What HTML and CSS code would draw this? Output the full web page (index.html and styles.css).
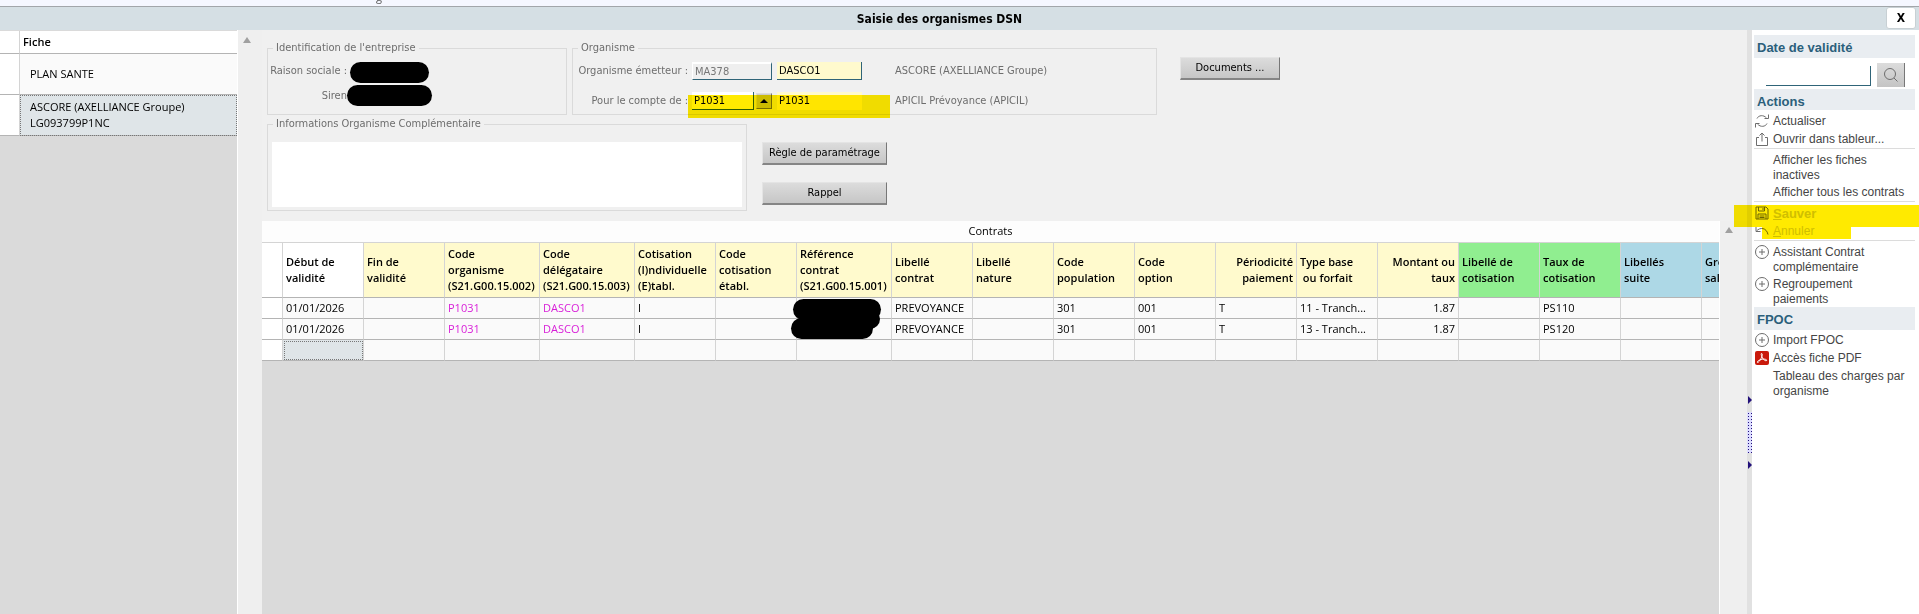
FILE: index.html
```html
<!DOCTYPE html>
<html lang="fr">
<head>
    <meta charset="UTF-8">
    <meta name="viewport" content="width=device-width, initial-scale=1.0">
    <title>Saisie des organismes DSN</title>
    <link rel="stylesheet" href="styles.css">
</head>
<body>
    <div class="top-strip"><span>g</span></div>

    <header class="title-bar">
        <h1>Saisie des organismes DSN</h1>
        <button class="close-btn" type="button">X</button>
    </header>

    <div class="window">
        <aside class="fiches">
            <table class="fiche-table">
                <thead>
                    <tr><th class="handle"></th><th>Fiche</th></tr>
                </thead>
                <tbody>
                    <tr><td class="handle"></td><td>PLAN SANTE</td></tr>
                    <tr class="selected"><td class="handle"></td><td>ASCORE (AXELLIANCE Groupe)<br>LG093799P1NC</td></tr>
                </tbody>
            </table>
        </aside>
        <div class="scroll-col scroll-left"><span class="arrow-up"></span></div>

        <main>
            <div class="form">
                <div class="form-row">
                    <fieldset class="entreprise">
                        <legend>Identification de l'entreprise</legend>
                        <div class="field"><span class="label">Raison sociale :</span><span class="mask mask-name"></span></div>
                        <div class="field"><span class="label">Siren</span><span class="mask mask-siren"></span></div>
                    </fieldset>

                    <fieldset class="organisme">
                        <legend>Organisme</legend>
                        <div class="field">
                            <label for="emetteur">Organisme émetteur :</label>
                            <input id="emetteur" class="code-in readonly" type="text" value="MA378" readonly>
                            <input class="delegate" type="text" value="DASCO1" aria-label="Délégataire">
                            <span class="org-name">ASCORE (AXELLIANCE Groupe)</span>
                        </div>
                        <div class="field">
                            <label for="compte">Pour le compte de :</label>
                            <div class="picker">
                                <input id="compte" type="text" value="P1031">
                                <button type="button" aria-label="Choisir"><span class="arrow-up dark"></span></button>
                            </div>
                            <input class="delegate plain" type="text" value="P1031" aria-label="Code du compte">
                            <span class="org-name">APICIL Prévoyance (APICIL)</span>
                        </div>
                        <span class="marker marker-compte"></span>
                    </fieldset>

                    <button class="btn btn-docs" type="button">Documents ...</button>
                </div>

                <div class="form-row">
                    <fieldset class="infos">
                        <legend>Informations Organisme Complémentaire</legend>
                        <textarea aria-label="Informations Organisme Complémentaire"></textarea>
                    </fieldset>
                    <div class="btn-stack">
                        <button class="btn" type="button">Règle de paramétrage</button>
                        <button class="btn" type="button">Rappel</button>
                    </div>
                </div>
            </div>

            <div class="grid-area">
                <div class="grid-scroll">
                    <div class="grid-title">Contrats</div>
                    <table class="contrats">
                        <colgroup>
                            <col class="c-handle"><col><col><col class="c-wide"><col class="c-wide"><col><col><col class="c-wide">
                            <col><col><col><col><col><col><col><col><col><col><col>
                        </colgroup>
                        <thead>
                            <tr>
                                <th class="white"></th>
                                <th class="white">Début de validité</th>
                                <th>Fin de<br>validité</th>
                                <th>Code<br>organisme (S21.G00.15.002)</th>
                                <th>Code<br>délégataire (S21.G00.15.003)</th>
                                <th>Cotisation (I)ndividuelle (E)tabl.</th>
                                <th>Code cotisation établ.</th>
                                <th>Référence contrat (S21.G00.15.001)</th>
                                <th>Libellé<br>contrat</th>
                                <th>Libellé<br>nature</th>
                                <th>Code population</th>
                                <th>Code<br>option</th>
                                <th class="right">Périodicité paiement</th>
                                <th>Type base<br>&nbsp;ou forfait</th>
                                <th class="right">Montant ou taux</th>
                                <th class="green">Libellé de cotisation</th>
                                <th class="green">Taux de cotisation</th>
                                <th class="blue">Libellés<br>suite</th>
                                <th class="blue">Groupe<br>salarié</th>
                            </tr>
                        </thead>
                        <tbody>
                            <tr>
                                <td class="white"></td><td>01/01/2026</td><td></td>
                                <td class="code">P1031</td><td class="code">DASCO1</td><td>I</td><td></td>
                                <td class="masked"><span class="mask mask-ref1"></span></td>
                                <td>PREVOYANCE</td><td></td><td>301</td><td>001</td><td>T</td>
                                <td>11 - Tranch...</td><td class="right">1.87</td><td></td><td>PS110</td><td></td><td></td>
                            </tr>
                            <tr>
                                <td class="white"></td><td>01/01/2026</td><td></td>
                                <td class="code">P1031</td><td class="code">DASCO1</td><td>I</td><td></td>
                                <td class="masked"><span class="mask mask-ref2"></span></td>
                                <td>PREVOYANCE</td><td></td><td>301</td><td>001</td><td>T</td>
                                <td>13 - Tranch...</td><td class="right">1.87</td><td></td><td>PS120</td><td></td><td></td>
                            </tr>
                            <tr>
                                <td class="white"></td><td class="focus"></td><td></td><td></td><td></td><td></td><td></td><td></td><td></td>
                                <td></td><td></td><td></td><td></td><td></td><td></td><td></td><td></td><td></td><td></td>
                            </tr>
                        </tbody>
                    </table>
                </div>
                <div class="scroll-col scroll-grid"><span class="arrow-up"></span></div>
            </div>
        </main>

        <div class="splitter">
            <span class="split-arrow"></span>
            <span class="split-dots"></span>
            <span class="split-arrow"></span>
        </div>

        <nav class="side">
            <h2><label for="date">Date de validité</label></h2>
            <div class="search">
                <input id="date" type="text">
                <button type="button" aria-label="Rechercher">
                    <svg width="16" height="16" viewBox="0 0 16 16"><circle cx="7" cy="7" r="5.5"/><path d="M11 11l3.500 3.500"/></svg>
                </button>
            </div>

            <h2 class="compact">Actions</h2>
            <a href="#">
                <svg width="14" height="14" viewBox="0 0 14 14"><path d="M2 4.500C3.500 1.200 8.500.5 11.500 4M13.500.5v4H9.500M12 9.500C10.500 12.800 5.500 13.500 2.500 10M.5 13.500v-4h4"/></svg>
                <span>Actualiser</span>
            </a>
            <a href="#">
                <svg width="14" height="14" viewBox="0 0 14 14"><path d="M4 5.500H1.500v8h11v-8H10M7 9.500V1M4.500 3.500L7 1l2.500 2.500"/></svg>
                <span>Ouvrir dans tableur...</span>
            </a>
            <hr>
            <a href="#"><span>Afficher les fiches<br>inactives</span></a>
            <a href="#"><span>Afficher tous les contrats</span></a>
            <hr>
            <div class="marked">
                <a href="#" class="off">
                    <svg width="14" height="14" viewBox="0 0 14 14"><path d="M1 1h10l2 2v10H1zM3.500 1v4h6V1M8 2v2M3 13V8h8v5M4.500 10h5M4.500 11.500h5"/></svg>
                    <span class="bold"><u>S</u>auver</span>
                </a>
                <a href="#" class="off">
                    <svg width="14" height="14" viewBox="0 0 14 14"><path d="M1 3v4.500h4.500M1.500 7C5 3 11.500 3.500 13 10.500"/></svg>
                    <span><u>A</u>nnuler</span>
                </a>
                <span class="marker marker-save"></span>
                <span class="marker marker-undo"></span>
            </div>
            <hr>
            <a href="#">
                <svg width="14" height="14" viewBox="0 0 14 14"><circle cx="7" cy="7" r="6.500"/><path d="M7 4v6M4 7h6"/></svg>
                <span>Assistant Contrat<br>complémentaire</span>
            </a>
            <a href="#">
                <svg width="14" height="14" viewBox="0 0 14 14"><circle cx="7" cy="7" r="6.500"/><path d="M7 4v6M4 7h6"/></svg>
                <span>Regroupement<br>paiements</span>
            </a>

            <h2>FPOC</h2>
            <a href="#">
                <svg width="14" height="14" viewBox="0 0 14 14"><circle cx="7" cy="7" r="6.500"/><path d="M7 4v6M4 7h6"/></svg>
                <span>Import FPOC</span>
            </a>
            <a href="#">
                <svg class="pdf" width="14" height="14" viewBox="0 0 14 14"><rect width="14" height="14" rx="2"/><path d="M6.500 2.500c1.500 0 .5 3-.5 5-1 2-2.500 4-3.500 4-1-1 2-3 5-3.300 2.500-.3 4.500.3 4.200 1.300-.8 1-3.200-.8-4.200-2.500-1-1.700-1.800-4.500-1-4.500z"/></svg>
                <span>Accès fiche PDF</span>
            </a>
            <a href="#"><span>Tableau des charges par<br>organisme</span></a>
        </nav>
    </div>
</body>
</html>
```

FILE: styles.css
```css
* {
    box-sizing: border-box;
}

body {
    margin: 0;
    height: 100vh;
    display: flex;
    flex-direction: column;
    overflow: hidden;
    background: #f0f0f0;
    color: #000;
    font-family: "Open Sans", "Noto Sans", sans-serif;
    font-size: 11px;
    line-height: 16px;
}

button,
input,
textarea {
    font: inherit;
    color: inherit;
}

/* Title */
.top-strip {
    height: 7px;
    flex: none;
    overflow: hidden;
    padding-left: 376px;
    background: #f5f7ff;
    border-bottom: 1px solid #a2a6aa;
    display: flex;
    align-items: flex-end;
    color: #555;
}

.top-strip span {
    padding-bottom: 1px;
}

.title-bar {
    flex: none;
    height: 23px;
    display: flex;
    align-items: center;
    justify-content: center;
    position: relative;
    background: #d5dfe4;
}

.title-bar h1 {
    margin: 0;
    padding-right: 40px;
    font-family: "DejaVu Sans Condensed", "DejaVu Sans", sans-serif;
    font-size: 12px;
    line-height: 16px;
}

.close-btn {
    position: absolute;
    right: 3px;
    top: 0;
    width: 30px;
    height: 22px;
    padding: 0;
    border: 1px solid #c8d0d4;
    border-radius: 3px;
    background: #fff;
    font-family: "DejaVu Sans Condensed", "DejaVu Sans", sans-serif;
    font-size: 12px;
    font-weight: bold;
}

.window {
    flex: 1;
    min-height: 0;
    display: flex;
}

/* Record list */
.fiches {
    flex: none;
    width: 238px;
    background: #dadada;
    border-right: 1px solid #fff;
}

.fiche-table,
.contrats {
    border-collapse: separate;
    border-spacing: 0;
    table-layout: fixed;
}

.fiche-table {
    width: 100%;
    margin-top: 1px;
}

.fiche-table th,
.fiche-table td {
    border-bottom: 1px solid #b4b4b4;
    text-align: left;
    background: #fff;
}

.fiche-table th {
    height: 23px;
    padding: 0 3px;
    font-weight: 600;
}

.fiche-table td {
    height: 41px;
    padding: 0 10px;
    background: #fafafa;
}

.fiche-table .handle {
    width: 20px;
    padding: 0;
    background: #fff;
    border-right: 1px solid #d4d4d4;
}

.fiche-table .selected td:last-child {
    background: #dfe5e8;
    outline: 1px dotted #777;
    outline-offset: -1px;
}

.scroll-col {
    flex: none;
    display: flex;
    justify-content: center;
    align-items: flex-start;
    background: #efefef;
}

.scroll-left {
    width: 24px;
    padding: 7px 6px 0 0;
}

.arrow-up {
    width: 0;
    height: 0;
    border: 4px solid transparent;
    border-top: 0;
    border-bottom: 6px solid #a0a0a0;
}

.arrow-up.dark {
    display: inline-block;
    border-bottom: 4px solid #000;
}

/* Form */
main {
    flex: 1;
    min-width: 0;
    display: flex;
    flex-direction: column;
}

.form {
    flex: none;
    padding: 10px 5px;
    color: #6d6d6d;
    font-family: "DejaVu Sans Condensed", "DejaVu Sans", sans-serif;
}

.form-row {
    display: flex;
    align-items: flex-start;
}

.form-row + .form-row {
    margin-top: 1px;
}

fieldset {
    position: relative;
    min-width: 0;
    margin: 0;
    padding: 0;
    border: 1px solid #dadada;
}

legend {
    height: 16px;
    margin-left: 5px;
    padding: 0 3px;
}

.entreprise {
    width: 300px;
    height: 75px;
    padding-top: 2px;
}

.organisme {
    width: 585px;
    height: 75px;
    margin-left: 5px;
}

.field {
    display: flex;
    align-items: center;
    height: 25px;
}

.entreprise .label {
    width: 79px;
    text-align: right;
    white-space: nowrap;
}

.mask {
    background: #000;
    border-radius: 11px;
}

.mask-name {
    width: 79px;
    height: 21px;
    margin: 4px 0 0 3px;
}

.mask-siren {
    width: 85px;
    height: 21px;
}

.organisme .field {
    height: 30px;
}

.organisme .field label {
    width: 115px;
    margin-right: 4px;
    text-align: right;
}

.organisme input {
    height: 18px;
    margin: 0;
    padding: 0 2px;
    border: 0;
    border-right: 1px solid #2f6478;
    border-bottom: 1px solid #2f6478;
    background: #fff;
    color: #000;
    outline: 0;
}

.organisme .code-in {
    width: 80px;
}

.organisme .readonly {
    background: #efefef;
    border-top: 2px solid #fff;
    border-left: 1px solid #fff;
    color: #777;
}

.organisme .delegate {
    width: 85px;
    margin-left: 5px;
    background: #fffacd;
}

.organisme .plain {
    border-color: transparent;
}

.org-name {
    margin-left: 33px;
}

.picker {
    display: flex;
    align-items: center;
    width: 80px;
}

.picker input {
    width: 62px;
}

.picker button {
    display: flex;
    align-items: center;
    justify-content: center;
    width: 16px;
    height: 16px;
    margin-left: 2px;
    padding: 0;
    border: 1px solid #ddd;
    border-right-color: #777;
    border-bottom-color: #777;
    background: #ccc;
}

/* Highlighter strokes laid over the controls */
.marker {
    position: absolute;
    background: #ffea00;
    mix-blend-mode: multiply;
    pointer-events: none;
}

.marker-compte {
    left: 115px;
    bottom: -4px;
    width: 202px;
    height: 23px;
}

.btn {
    width: 125px;
    height: 23px;
    padding: 0;
    border: 1px solid #e4e4e4;
    border-right-color: #777;
    border-bottom: 2px solid #858585;
    background: linear-gradient(#dcdcdc, #c6c6c6);
    color: #000;
}

.btn-docs {
    width: 100px;
    margin: 17px 0 0 23px;
}

.infos {
    width: 480px;
    height: 95px;
}

.infos textarea {
    display: block;
    width: 470px;
    height: 65px;
    margin: 10px 0 0 4px;
    padding: 2px;
    border: 0;
    background: #fff;
    resize: none;
}

.btn-stack {
    display: flex;
    flex-direction: column;
    gap: 17px;
    margin: 26px 0 0 15px;
}

/* Contracts grid */
.grid-area {
    flex: 1;
    min-height: 0;
    display: flex;
}

.grid-scroll {
    flex: 1;
    min-width: 0;
    overflow: hidden;
    background: #dadada;
    border-right: 1px solid #fff;
}

.scroll-grid {
    width: 27px;
    padding: 6px 10px 0 0;
}

.grid-title {
    height: 22px;
    line-height: 20px;
    text-align: center;
    background: #fdfdfd;
    border-bottom: 1px solid #d4d4d4;
}

.contrats {
    width: 1520px;
}

.contrats col {
    width: 81px;
}

.contrats .c-handle {
    width: 21px;
}

.contrats .c-wide {
    width: 95px;
}

.contrats th,
.contrats td {
    padding: 0 3px;
    border-right: 1px solid #d4d4d4;
    border-bottom: 1px solid #b4b4b4;
    text-align: left;
    white-space: nowrap;
    background: #fafafa;
}

.contrats th {
    height: 55px;
    font-weight: 600;
    white-space: normal;
    background: #fffacd;
}

.contrats td {
    height: 21px;
}

.contrats .white {
    background: #fff;
}

.contrats .green {
    background: #90ee90;
}

.contrats .blue {
    background: #add8e6;
}

.contrats .right {
    text-align: right;
}

.contrats .code {
    color: #d81ed8;
}

.contrats .focus {
    background: #dfe5e8;
    outline: 1px dotted #777;
    outline-offset: -2px;
}

.masked {
    position: relative;
}

.masked .mask {
    position: absolute;
    z-index: 1;
}

.mask-ref1 {
    left: -4px;
    top: 1px;
    width: 88px;
    height: 21px;
}

.mask-ref2 {
    left: -6px;
    top: -1px;
    width: 82px;
    height: 21px;
}

.mask-ref2::after {
    content: "";
    position: absolute;
    right: -7px;
    top: -9px;
    width: 40px;
    height: 20px;
    border-radius: 10px;
    background: #000;
}

/* Splitter */
.splitter {
    flex: none;
    width: 5px;
    display: flex;
    flex-direction: column;
    align-items: flex-end;
    gap: 8px;
    padding-top: 366px;
    background: #e1e1e1;
}

.split-arrow {
    border: 4px solid transparent;
    border-right: 0;
    border-left-color: #22107a;
}

.split-dots {
    width: 5px;
    height: 41px;
    background: radial-gradient(circle, #22107a 1px, #dcdcff 1px) 0 0 / 3px 3px;
}

/* Side menu */
.side {
    position: relative;
    flex: none;
    width: 167px;
    padding: 5px 4px 0 2px;
    background: #fff;
    font-family: "Liberation Sans", Arial, sans-serif;
    font-size: 12px;
    line-height: 15px;
}

.side h2 {
    height: 23px;
    margin: 0 0 1px;
    padding: 2px 3px 0;
    background: #e9edf1;
    color: #2b5f7b;
    font-size: 13px;
    line-height: 21px;
}

.side .compact {
    height: 21px;
    margin-bottom: 2px;
}

.search {
    display: flex;
    align-items: flex-end;
    justify-content: space-between;
    height: 28px;
    margin-bottom: 2px;
    padding: 0 10px 0 12px;
}

.search input {
    width: 105px;
    height: 20px;
    margin-bottom: 1px;
    padding: 0 2px;
    border: 0;
    border-right: 1px solid #2f6478;
    border-bottom: 1px solid #2f6478;
    background: #fff;
}

.search button {
    width: 28px;
    height: 24px;
    padding: 3px 0 0;
    border: 0;
    border-right: 1px solid #777;
    background: linear-gradient(#dcdcdc, #c4c4c4);
}

.side svg {
    flex: none;
    fill: none;
    stroke: #6d6d6d;
    stroke-width: 1;
}

.side a {
    display: flex;
    gap: 4px;
    min-height: 18px;
    padding: 2px 0 0 1px;
    color: #454545;
    text-decoration: none;
}

.side a > span:first-child {
    margin-left: 18px;
}

.side hr {
    margin: 0 0 2px;
    border: 0;
    border-top: 1px solid #dcdcdc;
}

.side .off {
    color: #d0d0d0;
}

.side .bold {
    font-size: 13px;
    font-weight: bold;
}

.side .pdf rect {
    fill: #c9190b;
    stroke: none;
}

.side .pdf path {
    stroke: #fff;
}

.marked {
    position: relative;
}

.marker-save {
    left: -20px;
    right: -4px;
    top: 1px;
    height: 22px;
}

.marker-undo {
    left: 8px;
    top: 23px;
    width: 89px;
    height: 12px;
}
```
